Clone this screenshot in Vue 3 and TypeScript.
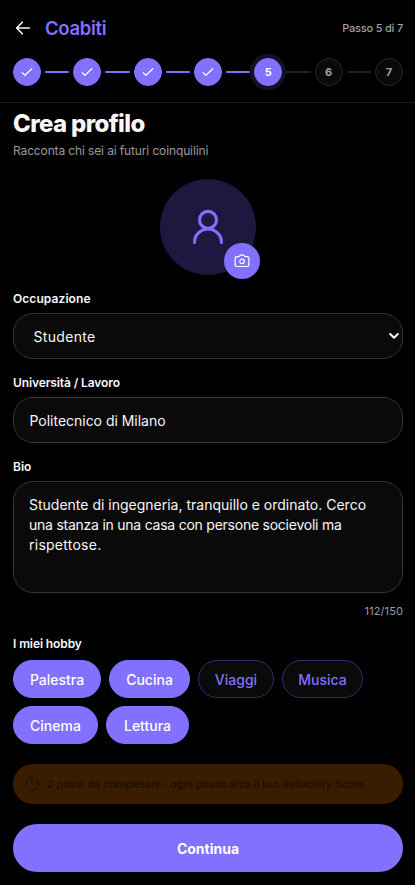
<script setup lang="ts">
import { ref, computed } from 'vue'

interface Hobby {
  name: string
  width: number
  selected: boolean
}

const totalSteps = 7
const currentStep = 5
const occupation = ref('Studente')
const workplace = ref('Politecnico di Milano')
const bioLines = ref<string[]>([
  'Studente di ingegneria, tranquillo e ordinato. Cerco',
  'una stanza in una casa con persone socievoli ma',
  'rispettose.',
])
const bioCount = computed(() => `${bioLines.value.join(' ').length}/150`)
const hobbies = ref<Hobby[]>([
  { name: 'Palestra', width: 88, selected: true },
  { name: 'Cucina', width: 81, selected: true },
  { name: 'Viaggi', width: 76, selected: false },
  { name: 'Musica', width: 81, selected: false },
  { name: 'Cinema', width: 85, selected: true },
  { name: 'Lettura', width: 83, selected: true },
])
</script>

<template>
  <div class="page">
    <header class="header">
      <div class="topbar">
        <svg class="back" viewBox="0 0 20 20" width="20" height="20">
          <path d="M16.3 10H3.800M9.400 4.200 3.600 10l5.800 5.800" />
        </svg>
        <span class="brand">Coabiti</span>
        <span class="progress">Passo {{ currentStep }} di {{ totalSteps }}</span>
      </div>
      <div class="steps">
        <template v-for="n in totalSteps" :key="n">
          <span v-if="n > 1" class="bar" :class="{ filled: n <= currentStep }"></span>
          <span class="step" :class="{ done: n < currentStep, current: n === currentStep }">
            <svg v-if="n < currentStep" viewBox="0 0 14 14" width="14" height="14">
              <path d="M2.200 7.700 5 10.300 11.800 3.700" />
            </svg>
            <template v-else>{{ n }}</template>
          </span>
        </template>
      </div>
    </header>

    <main class="content">
      <h1>Crea profilo</h1>
      <p class="subtitle">Racconta chi sei ai futuri coinquilini</p>

      <div class="avatar">
        <svg viewBox="0 0 36 36" width="36" height="36">
          <circle cx="18" cy="10.900" r="8.500" />
          <path d="M4.500 33.500a13.500 13.500 0 0 1 27 0" />
        </svg>
        <button class="camera" type="button" aria-label="Foto">
          <svg viewBox="0 0 16 16" width="16" height="16">
            <path d="M3 3.700h1.500c.5 0 .8-.2 1-.7.2-.6.6-.9 1.200-.9h2.600c.6 0 1 .3 1.200.9.2.5.5.7 1 .7H13c1.200 0 1.900.8 1.900 1.900v6c0 1.200-.7 1.900-1.900 1.900H3c-1.200 0-1.900-.7-1.900-1.900v-6c0-1.100.7-1.900 1.900-1.900Z" />
            <circle cx="8" cy="8.400" r="2.200" />
          </svg>
        </button>
      </div>

      <div class="label occupation-label">Occupazione</div>
      <div class="field select">
        <span>{{ occupation }}</span>
        <svg viewBox="0 0 10 8" width="10" height="8"><path d="M1.200 2 5 5.800 8.800 2" /></svg>
      </div>
      <div class="label work-label">Università / Lavoro</div>
      <div class="field"><span>{{ workplace }}</span></div>
      <div class="label bio-label">Bio</div>
      <div class="field bio">
        <div v-for="line in bioLines" :key="line" class="bio-line">{{ line }}</div>
      </div>
      <div class="counter">{{ bioCount }}</div>

      <div class="label hobby-label">I miei hobby</div>
      <div class="chips">
        <button
          v-for="h in hobbies"
          :key="h.name"
          type="button"
          class="chip"
          :class="{ selected: h.selected }"
          :style="{ width: h.width + 'px' }"
          @click="h.selected = !h.selected"
        >{{ h.name }}</button>
      </div>

      <div class="notice">
        <svg viewBox="0 0 14 14" width="14" height="14">
          <circle cx="7" cy="7" r="6.100" />
          <path d="M6.900 3.300v3.900l2 1.100" />
        </svg>
        <span>2 passi da completare · ogni passo alza il tuo Reliability Score</span>
      </div>
      <button class="cta" type="button">Continua</button>
    </main>
  </div>
</template>

<style>
body {
  background: #000;
  overflow: hidden;
}
</style>

<style scoped>
.page {
  height: 885px;
  box-sizing: border-box;
  overflow: hidden;
  background: #000;
  color: #f7f7f8;
  font-family: Inter, "Open Sans", sans-serif;
}
svg {
  display: block;
  flex: none;
  fill: none;
  stroke: currentColor;
  stroke-linecap: round;
  stroke-linejoin: round;
}
button {
  font-family: inherit;
  padding: 0;
  cursor: pointer;
}
.header {
  height: 103px;
  box-sizing: border-box;
  padding: 14px 12px 0 13px;
  border-bottom: 1px solid #1c1c1c;
}
.topbar {
  display: flex;
  align-items: center;
  height: 28px;
}
.back { stroke-width: 1.6; }
.brand {
  margin-left: 12px;
  color: #8270ff;
  font-size: 18.500px;
  font-weight: 600;
  letter-spacing: -0.300px;
}
.progress {
  margin-left: auto;
  color: #a0a0a0;
  font-size: 11px;
  font-weight: 500;
  letter-spacing: -0.200px;
}
.steps {
  display: flex;
  align-items: center;
  gap: 4px;
  margin-top: 16px;
}
.step {
  display: flex;
  flex: none;
  align-items: center;
  justify-content: center;
  width: 28px;
  height: 28px;
  box-sizing: border-box;
  border: 1px solid #292929;
  border-radius: 50%;
  background: #0a0a0a;
  color: #a0a0a0;
  font-size: 11px;
  font-weight: 700;
}
.done,
.current {
  border-color: #8270ff;
  background: #8270ff;
  color: #fff;
}
.step svg { stroke-width: 1.200; }
.current { box-shadow: 0 0 0 4px #141026; }
.bar {
  flex: 1;
  height: 2px;
  border-radius: 1px;
  background: #222;
}
.bar.filled { background: #8270ff; }
.content { padding: 5px 12px 0 13px; }
h1 {
  margin: 0;
  font-size: 24px;
  line-height: 32px;
  font-weight: 800;
  letter-spacing: -0.650px;
}
.subtitle {
  margin: 2px 0 0;
  color: #9b9b9b;
  font-size: 12px;
  line-height: 18px;
  letter-spacing: -0.130px;
}
.avatar {
  position: relative;
  display: flex;
  align-items: center;
  justify-content: center;
  width: 96px;
  height: 96px;
  margin: 19px auto 0;
  border-radius: 50%;
  background: #1e173f;
  color: #8270ff;
}
.avatar > svg { stroke-width: 3.100; }
.camera {
  position: absolute;
  right: -4px;
  bottom: -4px;
  display: flex;
  align-items: center;
  justify-content: center;
  width: 36px;
  height: 36px;
  border: 0;
  border-radius: 50%;
  background: #8270ff;
  color: #fff;
}
.camera svg { stroke-width: 1.200; }
.label {
  margin-top: 16px;
  height: 16px;
  margin-bottom: 6px;
  font-size: 12px;
  line-height: 16px;
  font-weight: 600;
}
.occupation-label { letter-spacing: 0.080px; }
.work-label { letter-spacing: -0.110px; }
.field {
  display: flex;
  align-items: center;
  height: 46px;
  box-sizing: border-box;
  padding: 0 15.500px;
  border: 1px solid #343434;
  border-radius: 20px;
  background: #0a0a0a;
  font-size: 14px;
  letter-spacing: -0.020px;
}
.select {
  justify-content: space-between;
  padding: 0 3px 0 19.500px;
  letter-spacing: 0.320px;
}
.select svg { stroke-width: 2; }
.bio {
  display: block;
  height: 112px;
  padding: 13px 15px;
  line-height: 20px;
  white-space: nowrap;
}
.bio-line { letter-spacing: 0; }
.bio-line:nth-child(2) { letter-spacing: -0.240px; }
.bio-line:nth-child(3) { letter-spacing: 0.250px; }
.counter {
  margin-top: 10px;
  color: #9b9b9b;
  font-size: 11px;
  line-height: 16px;
  text-align: right;
  letter-spacing: 0.100px;
}
.hobby-label {
  margin-top: 17px;
  margin-bottom: 8px;
  letter-spacing: -0.100px;
}
.chips {
  display: flex;
  flex-wrap: wrap;
  gap: 8px;
}
.chip {
  height: 38px;
  box-sizing: border-box;
  border: 1px solid #352c69;
  border-radius: 19px;
  background: #0a0a0a;
  color: #8270ff;
  font-size: 14px;
  font-weight: 500;
}
.chip.selected {
  border-color: #8270ff;
  background: #8270ff;
  color: #fff;
}
.notice {
  display: flex;
  align-items: center;
  gap: 8px;
  height: 40px;
  box-sizing: border-box;
  margin-top: 20px;
  padding: 0 12px;
  border-radius: 20px;
  background: #381d00;
  color: #1c0e00;
  font-size: 11px;
  font-weight: 500;
  letter-spacing: -0.070px;
  white-space: nowrap;
}
.cta {
  display: block;
  width: 100%;
  height: 48px;
  margin-top: 20px;
  border: 0;
  border-radius: 24px;
  background: #8270ff;
  color: #fff;
  font-size: 14px;
  font-weight: 700;
}
</style>
